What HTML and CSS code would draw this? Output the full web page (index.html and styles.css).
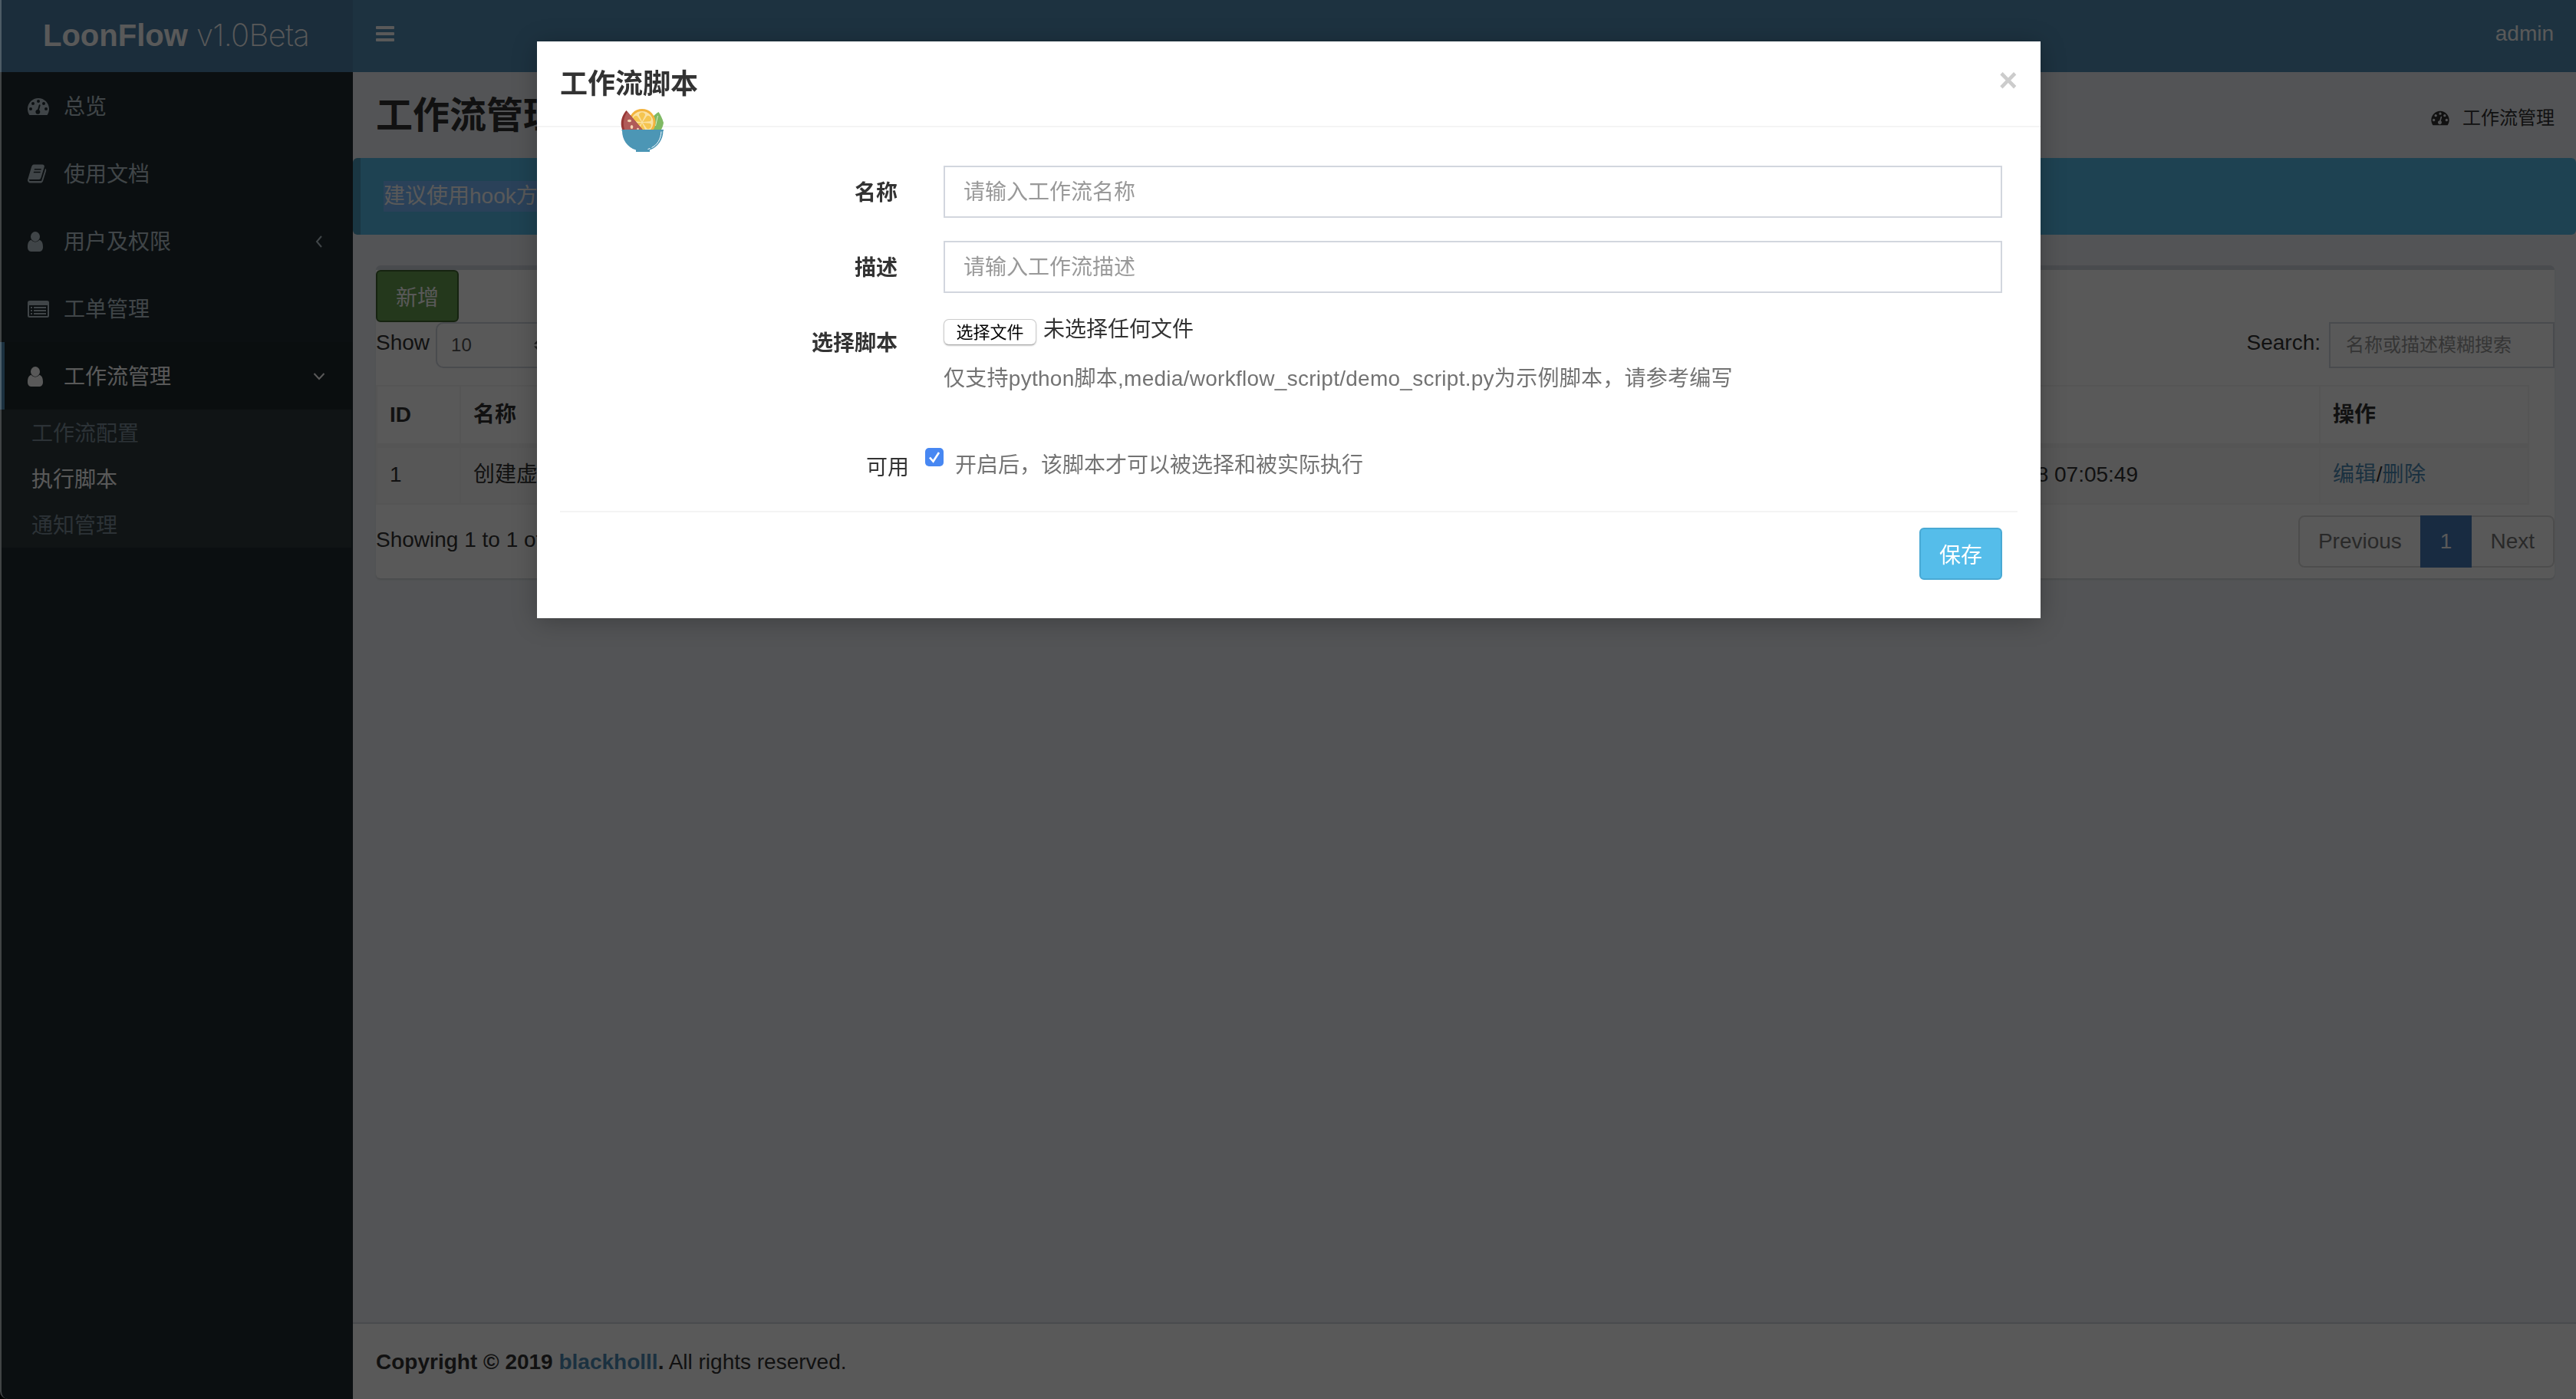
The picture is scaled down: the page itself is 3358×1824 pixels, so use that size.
FILE: index.html
```
<!DOCTYPE html>
<html lang="zh-CN">
  <head>
    <meta charset="utf-8">
    <title>LoonFlow</title>
    <link rel="stylesheet" href="styles.css">
  </head>

  <body>
    <svg class="sprite">
      <symbol id="dashboard" viewBox="0 0 28 24">
        <path fill-rule="evenodd" d="M14 1C6.300 1 0 7.300 0 15c0 2.700.8 5.200 2.100 7.400.3.400.6.600 1.100.6h21.600c.5 0 .8-.2 1.100-.6C27.200 20.200 28 17.700 28 15 28 7.300 21.700 1 14 1zM4 13a2 2 0 1 1 0 4 2 2 0 0 1 0-4zM7 6a2 2 0 1 1 0 4 2 2 0 0 1 0-4zM14 3a2 2 0 1 1 0 4 2 2 0 0 1 0-4zM21 6a2 2 0 1 1 0 4 2 2 0 0 1 0-4zM24 13a2 2 0 1 1 0 4 2 2 0 0 1 0-4zM15.900 9.200c.5.100.9.700.7 1.200L15 16.300a3 3 0 1 1-1.900-.5l1.600-5.900c.1-.5.700-.8 1.200-.7z"/>
      </symbol>
      <symbol id="book" viewBox="0 0 28 26">
        <path fill-rule="evenodd" d="M25.600 6.400c.6.900.5 1.900.2 3L21.500 23.500c-.4 1.300-1.800 2.500-3.300 2.500H3.900C2.200 26 .8 24.800.2 23.200c-.3-.8-.2-1.400 0-2L5.500 3.200C6 1.600 7 0 8.800 0h11.900c2.200 0 3.300 1.600 2.700 3.500l-4.300 14.100c-.8 2.500-1.400 3.400-3.300 3.400H2.400c-.6.100-.7.400-.4 1 .3.900 1.200 1.300 2 1.300h14.300c.6 0 1.200-.4 1.400-1L24.500 7c.1-.4.100-.7.100-1.100.4.100.8.300 1 .5zM9.700 6l-.4 1.700h9.500l.5-1.700zM8.700 10l-.5 1.700h9.500l.5-1.700z"/>
      </symbol>
      <symbol id="user" viewBox="0 0 20 26">
        <ellipse cx="10" cy="6.500" rx="6" ry="6.500"/>
        <path d="M4.800 10.800C1.100 11.400 0 16 0 20.300 0 23.600 1.800 26 4.300 26h11.400c2.500 0 4.300-2.400 4.300-5.700 0-4.300-1.100-8.900-4.800-9.500-1.300 1.800-3.100 2.700-5.200 2.700s-3.900-.9-5.200-2.700z"/>
      </symbol>
      <symbol id="list-alt" viewBox="0 0 28 22">
        <path fill-rule="evenodd" d="M2.500 0h23A2.500 2.500 0 0 1 28 2.500v17a2.500 2.500 0 0 1-2.500 2.500h-23A2.500 2.500 0 0 1 0 19.500v-17A2.500 2.500 0 0 1 2.500 0zM2 6v13.500c0 .3.200.5.500.5h23c.3 0 .5-.2.500-.5V6zM4 8h2v2H4zM8 8h16v2H8zM4 12h2v2H4zM8 12h16v2H8zM4 16h2v2H4zM8 16h16v2H8z"/>
      </symbol>
    </svg>

    <div class="wrapper">
      <header class="main-header">
        <a class="logo"><b>LoonFlow</b> <span>v1.0Beta</span></a>
        <nav class="navbar">
          <div class="bars"><i></i><i></i><i></i></div>
          <span>admin</span>
        </nav>
      </header>

      <div class="main">
        <aside class="sidebar">
          <ul class="menu">
            <li><svg class="dash"><use href="#dashboard"/></svg>总览</li>
            <li><svg class="book"><use href="#book"/></svg>使用文档</li>
            <li><svg class="user"><use href="#user"/></svg>用户及权限
              <svg class="arrow" viewBox="0 0 12 20"><path d="M9 3L3 10l6 7"/></svg></li>
            <li><svg class="list"><use href="#list-alt"/></svg>工单管理</li>
            <li class="active"><svg class="user"><use href="#user"/></svg>工作流管理
              <svg class="arrow down" viewBox="0 0 16 12"><path d="M1.500 2L8 9l6.500-7"/></svg></li>
          </ul>
          <ul class="submenu">
            <li>工作流配置</li>
            <li class="active">执行脚本</li>
            <li>通知管理</li>
          </ul>
        </aside>

        <div class="content-wrapper">
          <section class="content-header">
            <h1>工作流管理</h1>
            <div class="breadcrumb"><svg><use href="#dashboard"/></svg>工作流管理</div>
          </section>

          <div class="callout"><span>建议使用hook方式来实现</span></div>

          <div class="box">
            <button class="btn btn-success">新增</button>
            <div class="filters">
              <label>Show <span class="select">10
                <svg viewBox="0 0 10 14"><path d="M0 5.500L5 0l5 5.500zM0 8.500L5 14l5-5.500z"/></svg></span> entries</label>
              <label>Search: <input type="text" placeholder="名称或描述模糊搜索"></label>
            </div>
            <table class="table">
              <thead>
                <tr><th class="c-id">ID</th><th>名称</th><th class="c-time">创建时间</th><th class="c-op">操作</th></tr>
              </thead>
              <tbody>
                <tr><td>1</td><td>创建虚拟机</td><td>2018-04-28 07:05:49</td><td><a>编辑</a>/<a>删除</a></td></tr>
              </tbody>
            </table>
            <div class="table-footer">
              <span>Showing 1 to 1 of 1 entries</span>
              <div class="pagination"><span>Previous</span><span class="active">1</span><span>Next</span></div>
            </div>
          </div>

          <footer class="main-footer"><b>Copyright © 2019 <a>blackholll</a>.</b> All rights reserved.</footer>
        </div>
      </div>
    </div>

    <div class="backdrop"></div>
    <div class="window-edge"></div>

    <div class="modal">
      <div class="modal-header">
        <h4>工作流脚本</h4>
        <button class="close">×</button>
        <svg class="bowl" viewBox="0 0 56 56">
          <path fill="#7fb964" d="M41 28V11c2-3 5-5 8-7 3 4 5 9 6.500 14-.5 4-2 7-3.500 10z"/>
          <path fill="none" stroke="#d9ecca" d="M45 22L48 9"/>
          <circle cx="27.500" cy="17.500" r="17.500" fill="#f3b33d"/>
          <circle cx="27.500" cy="17.500" r="14.500" fill="#fae1a2"/>
          <g fill="#f5c550">
            <path id="seg" d="M27.500 16.500l-3.800-8c-.9-2.300 1.500-4 3.800-4s4.700 1.700 3.800 4z"/>
            <use href="#seg" transform="rotate(60 27.500 17.500)"/>
            <use href="#seg" transform="rotate(120 27.500 17.500)"/>
            <use href="#seg" transform="rotate(180 27.500 17.500)"/>
            <use href="#seg" transform="rotate(240 27.500 17.500)"/>
            <use href="#seg" transform="rotate(300 27.500 17.500)"/>
          </g>
          <path fill="#983735" d="M7 2C1 9-2 18 2 28h27z"/>
          <path fill="#b05a58" d="M8 4C3 12 2 20 5 28h24z"/>
          <g fill="#f2d3b0">
            <ellipse cx="11" cy="15.500" rx="2.600" ry="1.800"/>
            <ellipse cx="14" cy="23.500" rx="1.800" ry="2.600"/>
            <circle cx="22" cy="26" r="1.300"/>
          </g>
          <path fill="#4c96b5" d="M1 27h54.500v1.500H55C55 40 48 50 37.500 53.500V56h-18v-2.500C8 50 1.500 40 1.500 28.500H1z"/>
          <path fill="none" stroke="#fff" d="M52.500 29.500C52 40 47 47 40 50.500M38 51.500l-3 1"/>
        </svg>
      </div>
      <form class="modal-body">
        <div class="form-group">
          <label>名称</label>
          <input type="text" placeholder="请输入工作流名称">
        </div>
        <div class="form-group">
          <label>描述</label>
          <input type="text" placeholder="请输入工作流描述">
        </div>
        <div class="form-group file-group">
          <label>选择脚本</label>
          <div>
            <div class="file"><button type="button">选择文件</button><span>未选择任何文件</span></div>
            <p class="help">仅支持python脚本,media/workflow_script/demo_script.py为示例脚本，请参考编写</p>
          </div>
        </div>
        <div class="check-group">
          <label>可用</label>
          <span class="checkbox"><svg viewBox="0 0 24 24"><path d="M6 12.500l4.500 5L18 6"/></svg></span>
          <span class="help">开启后，该脚本才可以被选择和被实际执行</span>
        </div>
      </form>
      <div class="modal-footer"><button class="btn btn-info">保存</button></div>
    </div>
  </body>
</html>
```
FILE: styles.css
```
* {
  box-sizing: border-box;
}
body {
  margin: 0;
  font: 28px/40px "Liberation Sans", "Noto Sans CJK SC", sans-serif;
  color: #333;
  overflow: hidden;
}
ul, h1, h4, p {
  margin: 0;
  padding: 0;
  list-style: none;
}
input, button {
  font-family: inherit;
  margin: 0;
}
a {
  color: #4f8db8;
}
svg {
  display: block;
  fill: currentColor;
}
.sprite {
  display: none;
}
.wrapper {
  display: flex;
  flex-direction: column;
  height: 1824px;
}

/* header */
.main-header {
  display: flex;
  height: 94px;
  color: #fff;
}
.logo {
  width: 460px;
  padding: 20px 0 0 56px;
  background: #4d81a9;
  color: #fff;
  font-size: 40px;
  line-height: 52px;
  white-space: nowrap;
}
.logo span {
  font-family: Inter, sans-serif;
  font-weight: 200;
  letter-spacing: -.7px;
}
.navbar {
  flex: 1;
  display: flex;
  justify-content: space-between;
  align-items: center;
  padding: 0 29px 6px 30px;
  background: #538fb7;
}
.bars {
  display: flex;
  flex-direction: column;
  gap: 4px;
}
.bars i {
  width: 24px;
  height: 4px;
  border-radius: 1px;
  background: #fff;
}

/* sidebar */
.main {
  flex: 1;
  display: flex;
}
.sidebar {
  width: 460px;
  background: #222d32;
  color: #b8c7ce;
}
.menu li {
  display: flex;
  align-items: center;
  height: 88px;
  padding: 4px 36px 0 30px;
  border-left: 6px solid transparent;
}
.menu svg {
  width: 28px;
  height: 24px;
  margin: 0 19px 3px 0;
}
.menu .book {
  width: 26px;
  height: 25px;
  margin-right: 21px;
}
.menu .user {
  width: 20px;
  height: 26px;
  margin-right: 27px;
}
.menu .arrow {
  width: 12px;
  height: 20px;
  margin: 0 2px 3px auto;
  fill: none;
  stroke: currentColor;
  stroke-width: 2;
}
.menu .down {
  width: 16px;
  height: 12px;
  margin-right: 0;
}
.menu .active {
  background: #1e282c;
  border-color: #4f8db8;
  color: #fff;
}
.submenu {
  margin: 0 2px;
  background: #2f3a3e;
  color: #7e909b;
}
.submenu li {
  height: 60px;
  padding: 12px 39px 8px;
}
.submenu .active {
  color: #fff;
}

/* content */
.content-wrapper {
  flex: 1;
  display: flex;
  flex-direction: column;
  background: #edf0f5;
}
.content-header {
  display: flex;
  justify-content: space-between;
  height: 112px;
  padding: 29px 28px 0 30px;
}
h1 {
  font-size: 48px;
  font-weight: bold;
  line-height: 55px;
}
.breadcrumb {
  display: flex;
  align-items: center;
  height: 62px;
  font-size: 24px;
}
.breadcrumb svg {
  width: 24px;
  height: 20px;
  margin-right: 17px;
}
.callout {
  height: 100px;
  padding: 30px;
  border-left: 10px solid #4a9abd;
  border-radius: 6px;
  background: #56bdea;
  color: #fff;
}
.callout span {
  display: inline-block;
  background: #78bafe;
}
.box {
  height: 408px;
  margin: 40px 28px 0 30px;
  border-top: 6px solid #d2d6de;
  border-radius: 6px;
  background: #fff;
  box-shadow: 0 2px 2px rgba(0, 0, 0, .1);
}
.btn {
  display: block;
  width: 108px;
  height: 68px;
  padding: 0;
  border: 2px solid;
  border-radius: 6px;
  font-size: 28px;
  color: #fff;
}
.btn-success {
  background: #67a050;
  border-color: #3f6430;
}
.filters {
  display: flex;
  justify-content: space-between;
  height: 82px;
}
.filters label {
  display: flex;
  gap: 8px;
  line-height: 54px;
}
.select {
  display: flex;
  justify-content: space-between;
  align-items: center;
  width: 150px;
  height: 60px;
  padding: 0 10px 0 18px;
  border: 2px solid #d2d6de;
  border-radius: 10px;
  font-size: 24px;
  color: #555;
}
.select svg {
  width: 10px;
  height: 14px;
}
.filters input {
  width: 294px;
  height: 60px;
  margin-left: 3px;
  padding: 0 20px;
  border: 2px solid #d2d6de;
  background: #fff;
  font-size: 24px;
}
::placeholder {
  color: #999;
  opacity: 1;
}
.table {
  width: 2807px;
  border-collapse: collapse;
  table-layout: fixed;
}
.table th, .table td {
  padding: 16px;
  border: 2px solid #f4f4f4;
  text-align: left;
}
.table th {
  height: 78px;
  border-bottom-width: 6px;
}
.table td {
  height: 76px;
  padding: 15px 16px 17px;
  background: #f9f9f9;
}
.table a {
  letter-spacing: .4px;
}
.c-id {
  width: 109px;
}
.c-time {
  width: 514px;
}
.c-op {
  width: 272px;
}
.table-footer {
  display: flex;
  justify-content: space-between;
  padding-top: 14px;
}
.table-footer > span {
  padding-top: 12px;
}
.pagination {
  display: flex;
  height: 68px;
  border: 2px solid #ddd;
  border-radius: 8px;
  line-height: 64px;
  color: #777;
}
.pagination span {
  padding: 0 24px;
}
.pagination .active {
  margin: -2px 0;
  padding: 2px 26px;
  background: #457bba;
  color: #fff;
}
.main-footer {
  height: 100px;
  margin-top: auto;
  padding: 30px 30px 0;
  border-top: 2px solid #d2d6de;
  background: #fff;
}

.backdrop {
  position: fixed;
  inset: 0;
  background: rgba(0, 0, 0, .65);
}
.window-edge {
  position: fixed;
  inset: 0;
  border-left: 2px solid rgba(255, 255, 255, .22);
  border-bottom-left-radius: 10px;
  box-shadow: 0 0 0 10px #000;
}

/* modal */
.modal {
  position: absolute;
  top: 54px;
  left: 700px;
  width: 1960px;
  height: 752px;
  background: #fff;
  box-shadow: 0 4px 30px rgba(0, 0, 0, .25);
}
.modal-header {
  position: relative;
  display: flex;
  justify-content: space-between;
  height: 112px;
  padding: 30px 30px 0;
  border-bottom: 2px solid #f4f4f4;
}
h4 {
  font-size: 36px;
  font-weight: bold;
  line-height: 51px;
}
.close {
  height: 42px;
  padding: 0;
  border: 0;
  background: none;
  font-size: 42px;
  font-weight: bold;
  line-height: 36px;
  color: #ccc;
}
.bowl {
  position: absolute;
  left: 109px;
  top: 88px;
  width: 57px;
  height: 56px;
}
.modal-body {
  height: 502px;
  margin: 0 30px;
  padding-top: 50px;
  border-bottom: 2px solid #f4f4f4;
}
.form-group {
  display: flex;
  height: 68px;
  margin-bottom: 30px;
}
.form-group label {
  width: 440px;
  margin-right: 60px;
  padding-top: 16px;
  text-align: right;
  font-weight: bold;
}
.form-group input {
  width: 1380px;
  padding: 2px 24px 0;
  border: 2px solid #d2d6de;
  font-size: 28px;
}
.file-group {
  height: 144px;
}
.file {
  display: flex;
  height: 44px;
}
.file button {
  width: 121px;
  height: 34px;
  margin: 4px 9px 0 0;
  padding: 1px 0 0;
  border: 1px solid #ccc;
  border-bottom-color: #aaa;
  border-radius: 7px;
  background: #fff;
  box-shadow: 0 1px 2px rgba(0, 0, 0, .2);
  font-size: 22px;
  line-height: 30px;
}
.file span {
  line-height: 35px;
}
.help {
  color: #737373;
}
.file-group .help {
  margin-top: 18px;
  letter-spacing: .27px;
}
.check-group {
  display: flex;
  padding-left: 399px;
}
.check-group label {
  margin: 4px 21px 0 0;
}
.check-group .help {
  padding-top: 1px;
}
.checkbox {
  width: 24px;
  height: 24px;
  margin: -2px 15px 0 0;
  border-radius: 5px;
  background: #4787f2;
}
.checkbox path {
  fill: none;
  stroke: #fff;
  stroke-width: 2.6;
}
.modal-footer {
  display: flex;
  justify-content: flex-end;
  padding: 20px 50px;
}
.btn-info {
  background: #55bdea;
  border-color: #49a9d4;
}
```
